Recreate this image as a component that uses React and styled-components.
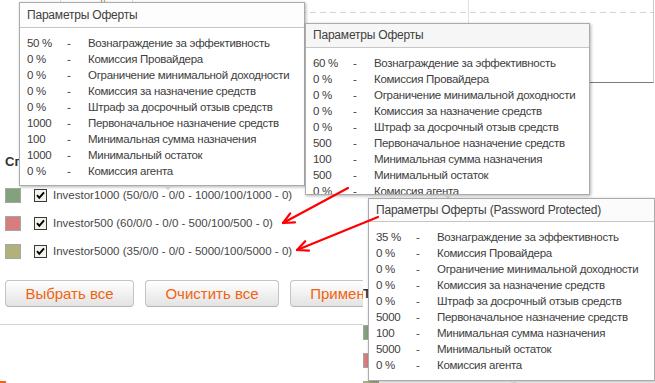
import React from 'react';
import styled, { createGlobalStyle } from 'styled-components';

const GlobalStyle = createGlobalStyle`
  html, body {
    margin: 0;
    padding: 0;
    background: #fff;
  }
  body {
    width: 655px;
    height: 383px;
    overflow: hidden;
    font-family: "Liberation Sans", Arial, sans-serif;
  }
`;

const investors = [
  { name: 'Investor1000 (50/0/0 - 0/0 - 1000/100/1000 - 0)', color: '#83a27c' },
  { name: 'Investor500 (60/0/0 - 0/0 - 500/100/500 - 0)', color: '#d77d7d' },
  { name: 'Investor5000 (35/0/0 - 0/0 - 5000/100/5000 - 0)', color: '#b2b17b' },
];

const labels = [
  'Вознаграждение за эффективность',
  'Комиссия Провайдера',
  'Ограничение минимальной доходности',
  'Комиссия за назначение средств',
  'Штраф за досрочный отзыв средств',
  'Первоначальное назначение средств',
  'Минимальная сумма назначения',
  'Минимальный остаток',
  'Комиссия агента',
];

const offers = [
  {
    title: 'Параметры Оферты',
    values: ['50 %', '0 %', '0 %', '0 %', '0 %', '1000', '100', '1000', '0 %'],
    x: 19, y: 2, w: 286, h: 184, head: 24, notch: 144, bg: '#fdfdfd',
  },
  {
    title: 'Параметры Оферты',
    values: ['60 %', '0 %', '0 %', '0 %', '0 %', '500', '100', '500', '0 %'],
    x: 305, y: 23, w: 285, h: 172, head: 23, notch: 138, bg: '#f6f6f6',
  },
  {
    title: 'Параметры Оферты (Password Protected)',
    values: ['35 %', '0 %', '0 %', '0 %', '0 %', '5000', '100', '5000', '0 %'],
    x: 368, y: 198, w: 287, h: 183, head: 22, notch: 141, bg: '#fbfbfb',
  },
];

const Page = styled.div`
  position: relative;
  width: 655px;
  height: 383px;
  overflow: hidden;
  background: #fff;
`;

const Chart = styled.div`
  margin-left: 40px;
  width: 613px;
  height: 82px;
  border-right: 1px solid #cacaca;
  border-bottom: 1px solid #7a7a7a;

  svg {
    display: block;
  }
`;

const Body = styled.div`
  display: flex;
`;

const Main = styled.div`
  width: 363px;
  flex: none;
  overflow: hidden;
`;

const Heading = styled.div`
  margin: 70px 0 0 5px;
  font-size: 13px;
  font-weight: bold;
  line-height: 18px;
  color: #333;
  white-space: nowrap;
`;

const Legend = styled.div`
  margin-top: 10px;
`;

const LegendRow = styled.div`
  display: flex;
  align-items: center;
  height: 28px;
  padding-left: 5px;
`;

const Swatch = styled.span`
  width: 16px;
  height: 15px;
  box-sizing: border-box;
  border: 1px solid #a6a6a6;
  background: ${p => p.$color};
  flex: none;
`;

const CheckBox = styled.svg`
  margin-left: 13px;
  flex: none;
`;

const LegendText = styled.span`
  margin-left: 6px;
  font-size: 11.5px;
  color: #474747;
  white-space: nowrap;
`;

const ButtonRow = styled.div`
  display: flex;
  gap: 11px;
  margin-top: 15px;
  padding-left: 5px;
`;

const Button = styled.button`
  width: ${p => p.$w}px;
  height: 27px;
  flex: none;
  box-sizing: border-box;
  border: 1px solid #c4c4c4;
  border-bottom-color: #b4b4b4;
  border-radius: 4px;
  background: linear-gradient(#ffffff, #f1f1f1 50%, #e3e3e3);
  color: #f0640f;
  font-family: "Liberation Sans", Arial, sans-serif;
  font-size: 15px;
  padding: 0;
  white-space: nowrap;
`;

const Separator = styled.div`
  margin-top: 17px;
  height: 1px;
  background: #d2d2d2;
`;

const BottomTitle = styled.div`
  margin: 51px 0 0 -6px;
  font-size: 20px;
  font-weight: bold;
  line-height: 24px;
  color: #f0640f;
  white-space: nowrap;
`;

const Ghost = styled.div`
  flex: 1;
  overflow: hidden;
`;

const GhostHead = styled.div`
  margin-top: 202px;
  font-size: 13px;
  font-weight: bold;
  line-height: 18px;
  color: #333;
`;

const GhostSwatch = styled(Swatch)`
  display: block;
  margin-top: ${p => p.$gap}px;
`;

const Panel = styled.div`
  position: absolute;
  left: ${p => p.$x}px;
  top: ${p => p.$y}px;
  width: ${p => p.$w}px;
  height: ${p => p.$h}px;
  box-sizing: border-box;
  display: flex;
  flex-direction: column;
  background: #fff;
  border: 1px solid #ababab;
  box-shadow: 1px 1px 3px rgba(0, 0, 0, 0.3);
  color: #404040;
  font-size: 11.5px;
  letter-spacing: -0.3px;

  &::after {
    content: '';
    position: absolute;
    left: ${p => p.$notch}px;
    bottom: -5px;
    border-left: 4px solid transparent;
    border-right: 4px solid transparent;
    border-top: 4px solid #cfcfcf;
  }
`;

const PanelHead = styled.div`
  flex: none;
  height: ${p => p.$h}px;
  line-height: ${p => p.$h}px;
  padding: 0 7px;
  background: ${p => p.$bg};
  border-bottom: 1px solid #c6c6c6;
  white-space: nowrap;
  font-size: 12px;
  letter-spacing: -0.2px;
`;

const PanelBody = styled.div`
  flex: 1;
  padding: 7px 7px 0;
  overflow: hidden;
`;

const ParamRow = styled.div`
  display: flex;
  height: 16px;
  line-height: 16px;
  white-space: nowrap;
`;

const Val = styled.span`
  width: 40px;
  flex: none;
`;

const Dash = styled.span`
  width: 21px;
  flex: none;
`;

const Arrows = styled.svg`
  position: absolute;
  left: 0;
  top: 0;
  pointer-events: none;
`;

const Check = () => (
  <CheckBox width="13" height="13" viewBox="0 0 13 13">
    <rect x="0.5" y="0.5" width="12" height="12" fill="#f3f3ee" stroke="#3a3a3a" />
    <path d="M3 6.2 L5.3 8.8 L10 3.4" fill="none" stroke="#000" strokeWidth="2" />
  </CheckBox>
);

const Offer = ({ offer }) => (
  <Panel $x={offer.x} $y={offer.y} $w={offer.w} $h={offer.h} $notch={offer.notch}>
    <PanelHead $h={offer.head} $bg={offer.bg}>{offer.title}</PanelHead>
    <PanelBody>
      {labels.map((label, i) => (
        <ParamRow key={label}>
          <Val>{offer.values[i]}</Val>
          <Dash>-</Dash>
          <span>{label}</span>
        </ParamRow>
      ))}
    </PanelBody>
  </Panel>
);

const App = () => {
  return (
    <Page>
      <GlobalStyle />
      <Chart>
        <svg width="613" height="82">
          <line x1="0" y1="12.5" x2="613" y2="12.5" stroke="#d4d4d4" strokeDasharray="6 4" />
          <line x1="20.5" y1="0" x2="20.5" y2="82" stroke="#d8d8d8" />
          <line x1="92.5" y1="0" x2="92.5" y2="82" stroke="#d8d8d8" />
          <line x1="428.5" y1="0" x2="428.5" y2="82" stroke="#e0e0e0" />
          <line x1="61" y1="0" x2="63" y2="4" stroke="#d66" />
          <line x1="64" y1="0" x2="66" y2="4" stroke="#7a7" />
        </svg>
      </Chart>
      <Body>
        <Main>
          <Heading>Список инвесторов</Heading>
          <Legend>
            {investors.map(inv => (
              <LegendRow key={inv.name}>
                <Swatch $color={inv.color} />
                <Check />
                <LegendText>{inv.name}</LegendText>
              </LegendRow>
            ))}
          </Legend>
          <ButtonRow>
            <Button $w={129}>Выбрать все</Button>
            <Button $w={134}>Очистить все</Button>
            <Button $w={118}>Применить</Button>
          </ButtonRow>
          <Separator />
          <BottomTitle>Доходность</BottomTitle>
        </Main>
        <Ghost>
          <GhostHead>Т</GhostHead>
          <GhostSwatch $color="#83a27c" $gap={22} />
          <GhostSwatch $color="#d77d7d" $gap={13} />
          <GhostSwatch $color="#b2b17b" $gap={13} />
        </Ghost>
      </Body>
      {offers.map((offer, i) => (
        <Offer key={i} offer={offer} />
      ))}
      <Arrows width="655" height="383">
        <g fill="none" stroke="#ff0000" strokeWidth="2.2" strokeLinecap="round" strokeLinejoin="round">
          <path d="M348 188 L283 223" />
          <path d="M295 222.3 L283 223 L290.2 213.4" />
          <path d="M378 217 L297 250" />
          <path d="M309 250.6 L297 250 L305.2 241.2" />
        </g>
      </Arrows>
    </Page>
  );
};

export default App;
